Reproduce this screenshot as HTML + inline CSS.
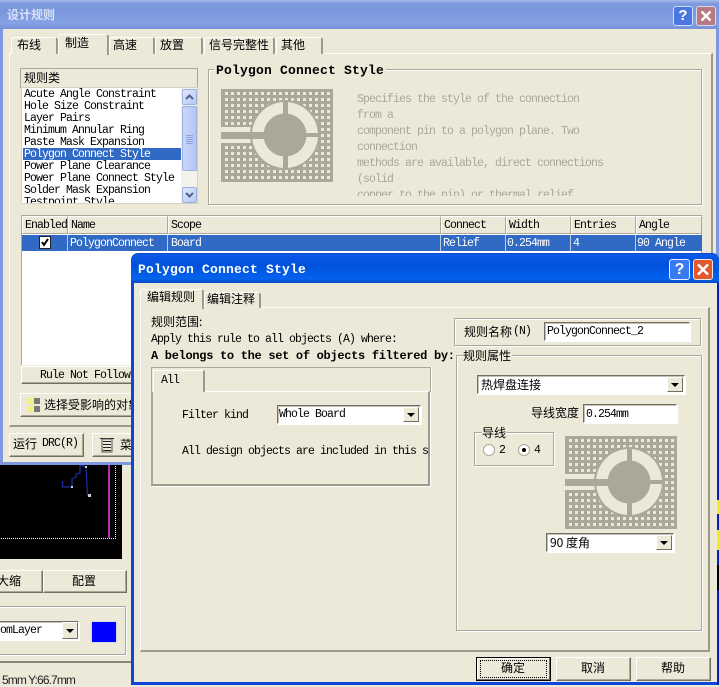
<!DOCTYPE html>
<html><head><meta charset="utf-8">
<style>
html,body{margin:0;padding:0}
body{width:719px;height:686px;overflow:hidden;position:relative;background:#ece9d8}
div,svg,span.a{position:absolute;box-sizing:border-box}
.t{position:absolute;white-space:pre;margin-top:1px;font:11.500px/12px "Liberation Mono","WenQuanYi Zen Hei",monospace;letter-spacing:-.9px;color:#000}
.b{position:absolute;white-space:pre;font:bold 13px/14px "Liberation Mono",monospace;letter-spacing:.2px;color:#000}
.c{position:absolute;white-space:pre;font:12px/14px "WenQuanYi Zen Hei","Noto Sans CJK SC",sans-serif;color:#000}
.g{color:#aca899}
.w{color:#fff}
.btn{background:#ece9d8;border:1px solid;border-color:#fff #716f64 #716f64 #fff;box-shadow:inset -1px -1px 0 #aca899}
.grp{border:1px solid #aca899;box-shadow:1px 1px 0 #fff,inset 1px 1px 0 #fff}
.in{background:#fff;border:1px solid;border-color:#716f64 #fff #fff #716f64;box-shadow:inset 1px 1px 0 #c4c1b2,1px 1px 0 #fff}
.tab{background:#ece9d8;border-top:1px solid #fff;border-left:1px solid #fff;border-right:2px solid #9d9a8a;border-radius:3px 3px 0 0}
.arrow{background:#ece9d8;border:1px solid;border-color:#fff #716f64 #716f64 #fff}
.arrow:after{content:"";position:absolute;left:50%;top:50%;margin:-2px 0 0 -4px;border:4px solid transparent;border-top:4px solid #000;border-bottom:0}
.h{background:#ece9d8;border-right:1px solid #aca899;border-bottom:1px solid #aca899;border-top:1px solid #fff;border-left:1px solid #fff}
</style></head><body>
<svg width="0" height="0" style="left:0;top:0">
<defs>
<pattern id="dots" width="6" height="6" patternUnits="userSpaceOnUse" patternTransform="translate(4 3)"><rect width="6" height="6" fill="#aca899"/><rect x="0" y="0" width="3" height="3" fill="#ece9d8"/></pattern>
<g id="pad">
<rect width="112" height="93" fill="url(#dots)"/>
<rect x="0" y="0" width="112" height="3" fill="#aca899"/><rect x="0" y="90" width="112" height="3" fill="#aca899"/>
<rect x="0" y="0" width="3" height="93" fill="#aca899"/><rect x="109" y="0" width="3" height="93" fill="#aca899"/>
<rect x="0" y="38" width="45" height="16" fill="#ece9d8"/>
<circle cx="64" cy="46" r="35" fill="#aca899"/>
<circle cx="64" cy="46" r="33" fill="#ece9d8"/>
<circle cx="64" cy="46" r="21.500" fill="#aca899"/>
<rect x="0" y="43" width="50" height="7" fill="#aca899"/>
<rect x="62" y="13" width="5" height="66" fill="#aca899"/>
<rect x="64" y="44" width="34" height="4" fill="#aca899"/>
</g>
</defs></svg>

<!-- background lower-left app -->
<div style="left:0;top:464px;width:122px;height:95px;background:#000"></div>
<svg style="left:0;top:464px" width="122" height="95">
<rect x="108" y="0" width="2" height="74" fill="#b030b0"/>
<path d="M115.500 0V74.500H0" fill="none" stroke="#fff" stroke-dasharray="1 1"/>
<path d="M62.500 17V23H72V15L76 13V10L80 9V1L86 3L87.500 31L89 31" fill="none" stroke="#1a2ea8" stroke-width="1.200"/>
<rect x="85" y="2" width="2" height="2" fill="#ccd"/><rect x="88" y="30" width="3" height="3" fill="#ccd"/><rect x="71" y="22" width="2" height="2" fill="#ccd"/>
</svg>
<div class="btn" style="left:-4px;top:570px;width:47px;height:23px"></div>
<div class="c" style="left:-3px;top:574px">大缩</div>
<div class="btn" style="left:43px;top:570px;width:84px;height:23px"></div>
<div class="c" style="left:72px;top:574px">配置</div>
<div class="grp" style="left:-4px;top:606px;width:130px;height:49px"></div>
<div class="c" style="left:-3px;top:600px;background:#ece9d8">:</div>
<div class="in" style="left:-4px;top:621px;width:83px;height:19px"></div>
<div class="t" style="left:0;top:624px">omLayer</div>
<div class="arrow" style="left:62px;top:622px;width:16px;height:17px"></div>
<div style="left:91px;top:621px;width:26px;height:22px;background:#0000ff;border:1px solid #d8d8e8"></div>
<div style="left:0;top:661px;width:131px;height:2px;background:#8a8778"></div>
<div class="t" style="left:2px;top:672px;font:12px/14px 'Liberation Sans',sans-serif;letter-spacing:-.9px;color:#222">5mm Y:66.7mm</div>

<!-- outer window -->
<div style="left:0;top:0;width:719px;height:465px;background:#7b98e0"></div>
<div style="left:0;top:0;width:719px;height:29px;background:linear-gradient(180deg,#a8bcec 0,#7f9ade 12%,#7a97df 40%,#86a1e4 80%,#7590d8 100%)"></div>
<div style="left:3px;top:29px;width:713px;height:433px;background:#ece9d8"></div>
<div class="c" style="left:7px;top:8px;color:#d8e2f6;font-weight:bold">设计规则</div>
<div style="left:673px;top:6px;width:20px;height:20px;background:#4a78e0;border:1px solid #d0dcf8;border-radius:3px"></div>
<div class="t" style="left:673px;top:7px;width:20px;text-align:center;color:#fff;font:bold 15px/16px 'Liberation Sans',sans-serif;letter-spacing:0">?</div>
<div style="left:696px;top:6px;width:20px;height:20px;background:#b87a80;border:1px solid #d8dcec;border-radius:3px"></div>
<svg style="left:696px;top:6px" width="20" height="20"><path d="M5.500 5.500L14.500 14.500M14.500 5.500L5.500 14.500" stroke="#fff" stroke-width="2.400"/></svg>

<!-- tab panel outer -->
<div style="left:9px;top:53px;width:704px;height:374px;border-top:1px solid #fff;border-left:1px solid #fff;border-right:2px solid #9d9a8a;border-bottom:2px solid #9d9a8a"></div>
<div class="tab" style="left:11px;top:37px;width:47px;height:17px"></div><div class="c" style="left:17px;top:38px">布线</div>
<div class="tab" style="left:109px;top:37px;width:46px;height:17px"></div><div class="c" style="left:113px;top:38px">高速</div>
<div class="tab" style="left:155px;top:37px;width:48px;height:17px"></div><div class="c" style="left:160px;top:38px">放置</div>
<div class="tab" style="left:204px;top:37px;width:71px;height:17px"></div><div class="c" style="left:209px;top:38px">信号完整性</div>
<div class="tab" style="left:276px;top:37px;width:47px;height:17px"></div><div class="c" style="left:281px;top:38px">其他</div>
<div class="tab" style="left:58px;top:34px;width:51px;height:21px"></div><div class="c" style="left:65px;top:36px">制造</div>

<!-- rule class -->
<div class="h" style="left:20px;top:68px;width:178px;height:20px;border-color:#aca899 #aca899 #aca899 #aca899"></div>
<div class="c" style="left:24px;top:71px">规则类</div>
<div style="left:21px;top:87px;width:177px;height:117px;background:#fff;border:1px solid #d5d2c2;overflow:hidden">
<div style="left:1px;top:60px;width:158px;height:12px;background:#316ac5"></div>
<div class="t" style="left:2px;top:0">Acute Angle Constraint</div>
<div class="t" style="left:2px;top:12px">Hole Size Constraint</div>
<div class="t" style="left:2px;top:24px">Layer Pairs</div>
<div class="t" style="left:2px;top:36px">Minimum Annular Ring</div>
<div class="t" style="left:2px;top:48px">Paste Mask Expansion</div>
<div class="t w" style="left:2px;top:60px">Polygon Connect Style</div>
<div class="t" style="left:2px;top:72px">Power Plane Clearance</div>
<div class="t" style="left:2px;top:84px">Power Plane Connect Style</div>
<div class="t" style="left:2px;top:96px">Solder Mask Expansion</div>
<div class="t" style="left:2px;top:108px">Testpoint Style</div>
<div style="left:159px;top:0;width:17px;height:115px;background:#f3f2ec"></div>
</div>
<div style="left:182px;top:89px;width:15px;height:16px;background:linear-gradient(135deg,#e0e8fd,#b8c8f4);border:1px solid #9db0e0;border-radius:2px"></div>
<svg style="left:182px;top:89px" width="15" height="16"><path d="M4 10L7.500 6.500L11 10" fill="none" stroke="#4d6185" stroke-width="2"/></svg>
<div style="left:182px;top:106px;width:15px;height:65px;background:linear-gradient(90deg,#c9d7fb,#b4c6f5);border:1px solid #9db0e0;border-radius:2px"></div>
<svg style="left:182px;top:106px" width="15" height="65"><path d="M4 29.500H11M4 31.500H11M4 33.500H11M4 35.500H11M4 37.500H11" stroke="#8fa4d8"/></svg>
<div style="left:182px;top:187px;width:15px;height:16px;background:linear-gradient(135deg,#e0e8fd,#b8c8f4);border:1px solid #9db0e0;border-radius:2px"></div>
<svg style="left:182px;top:187px" width="15" height="16"><path d="M4 6L7.500 9.500L11 6" fill="none" stroke="#4d6185" stroke-width="2"/></svg>

<!-- description group -->
<div class="grp" style="left:208px;top:69px;width:494px;height:136px"></div>
<div class="b" style="left:214px;top:64px;background:#ece9d8;padding:0 2px">Polygon Connect Style</div>
<svg style="left:221px;top:89px" width="112" height="93"><use href="#pad"/></svg>
<div style="left:357px;top:93px;width:300px;height:103px;overflow:hidden">
<div class="t g" style="left:0;top:0">Specifies the style of the connection</div>
<div class="t g" style="left:0;top:16px">from a</div>
<div class="t g" style="left:0;top:32px">component pin to a polygon plane. Two</div>
<div class="t g" style="left:0;top:48px">connection</div>
<div class="t g" style="left:0;top:64px">methods are available, direct connections</div>
<div class="t g" style="left:0;top:80px">(solid</div>
<div class="t g" style="left:0;top:96px">copper to the pin) or thermal relief</div>
</div>

<!-- table -->
<div style="left:21px;top:215px;width:681px;height:150px;background:#fff;border:1px solid #aca899;border-bottom:0"></div>
<div class="h" style="left:22px;top:216px;width:46px;height:18px"></div><div class="t" style="left:25px;top:219px">Enabled</div>
<div class="h" style="left:68px;top:216px;width:100px;height:18px"></div><div class="t" style="left:71px;top:219px">Name</div>
<div class="h" style="left:168px;top:216px;width:273px;height:18px"></div><div class="t" style="left:171px;top:219px">Scope</div>
<div class="h" style="left:441px;top:216px;width:65px;height:18px"></div><div class="t" style="left:444px;top:219px">Connect</div>
<div class="h" style="left:506px;top:216px;width:65px;height:18px"></div><div class="t" style="left:509px;top:219px">Width</div>
<div class="h" style="left:571px;top:216px;width:65px;height:18px"></div><div class="t" style="left:574px;top:219px">Entries</div>
<div class="h" style="left:636px;top:216px;width:66px;height:18px"></div><div class="t" style="left:639px;top:219px">Angle</div>
<div style="left:22px;top:235px;width:680px;height:16px;background:#316ac5"></div>
<div style="left:67px;top:235px;width:1px;height:16px;background:#b9cbe8"></div>
<div style="left:167px;top:235px;width:1px;height:16px;background:#b9cbe8"></div>
<div style="left:440px;top:235px;width:1px;height:16px;background:#b9cbe8"></div>
<div style="left:505px;top:235px;width:1px;height:16px;background:#b9cbe8"></div>
<div style="left:570px;top:235px;width:1px;height:16px;background:#b9cbe8"></div>
<div style="left:635px;top:235px;width:1px;height:16px;background:#b9cbe8"></div>
<div style="left:39px;top:236px;width:12px;height:13px;background:#fff;border:1px solid #222"></div>
<svg style="left:39px;top:236px" width="12" height="13"><path d="M3 6L5 9L9 3" fill="none" stroke="#000" stroke-width="2"/></svg>
<div class="t w" style="left:70px;top:237px">PolygonConnect</div>
<div class="t w" style="left:171px;top:237px">Board</div>
<div class="t w" style="left:443px;top:237px">Relief</div>
<div class="t w" style="left:507px;top:237px">0.254mm</div>
<div class="t w" style="left:573px;top:237px">4</div>
<div class="t w" style="left:637px;top:237px">90 Angle</div>

<div class="btn" style="left:21px;top:366px;width:681px;height:18px"></div>
<div class="t" style="left:40px;top:369px">Rule Not Follow</div>
<div class="btn" style="left:20px;top:393px;width:300px;height:24px"></div>
<svg style="left:27px;top:398px" width="14" height="15">
<rect x="0" y="0" width="6" height="6" fill="#f0f080"/><rect x="7" y="0" width="6" height="6" fill="#777"/>
<rect x="0" y="8" width="6" height="6" fill="#f0f080"/><rect x="7" y="8" width="6" height="6" fill="#777"/>
</svg>
<div class="c" style="left:44px;top:398px">选择受影响的对象</div>
<div class="btn" style="left:9px;top:433px;width:75px;height:24px"></div>
<div class="c" style="left:13px;top:437px">运行 </div>
<div class="t" style="left:42px;top:437px">DRC(R)</div>
<div class="btn" style="left:92px;top:433px;width:60px;height:24px"></div>
<svg style="left:99px;top:437px" width="16" height="16"><path d="M1 1.500H15M4 4.500H12M4 7.500H12M4 10.500H12M4 13.500H12" stroke="#222"/><rect x="3" y="2" width="10" height="13" fill="none" stroke="#555"/></svg>
<div class="c" style="left:120px;top:438px">菜单</div>

<!-- second window -->
<div style="left:131px;top:253px;width:588px;height:432px;background:#0b46d8;border-radius:7px 7px 0 0"></div>
<div style="left:131px;top:254px;width:588px;height:29px;background:linear-gradient(180deg,#0a5fe8 0,#0a56e4 10%,#0052dc 40%,#0462ee 85%,#0348c4 100%);border-radius:7px 7px 0 0"></div>
<div style="left:134px;top:283px;width:583px;height:399px;background:#ece9d8"></div>
<div style="left:717px;top:283px;width:2px;height:402px;background:#0a1fb0"></div>
<div style="left:717px;top:500px;width:2px;height:14px;background:#f0f020"></div>
<div style="left:717px;top:530px;width:2px;height:20px;background:#f0f020"></div>
<div style="left:717px;top:565px;width:2px;height:25px;background:#000"></div>
<div style="left:131px;top:685px;width:588px;height:1px;background:#ece9d8"></div>
<div class="b w" style="left:138px;top:263px">Polygon Connect Style</div>
<div style="left:669px;top:259px;width:21px;height:21px;background:#3a7af0;border:1px solid #e8eefc;border-radius:3px"></div>
<div class="t" style="left:669px;top:260px;width:21px;text-align:center;color:#fff;font:bold 16px/17px 'Liberation Sans',sans-serif;letter-spacing:0">?</div>
<div style="left:693px;top:259px;width:20px;height:21px;background:#e2582e;border:1px solid #f4e8e0;border-radius:3px"></div>
<svg style="left:693px;top:259px" width="20" height="21"><path d="M5 5.500L15 15.500M15 5.500L5 15.500" stroke="#fff" stroke-width="2.400"/></svg>

<div style="left:140px;top:307px;width:570px;height:345px;border-top:1px solid #fff;border-left:1px solid #fff;border-right:2px solid #9d9a8a;border-bottom:2px solid #9d9a8a"></div>
<div class="tab" style="left:204px;top:292px;width:57px;height:16px"></div><div class="c" style="left:207px;top:292px">编辑注释</div>
<div class="tab" style="left:140px;top:289px;width:64px;height:20px"></div><div class="c" style="left:147px;top:290px">编辑规则</div>

<div class="c" style="left:151px;top:315px">规则范围:</div>
<div class="t" style="left:151px;top:333px">Apply this rule to all objects (A) where:</div>
<div class="b" style="left:151px;top:349px;font-size:12px;letter-spacing:-.3px">A belongs to the set of objects filtered by:</div>

<div style="left:151px;top:367px;width:280px;height:25px;border:1px solid #aca899;border-bottom:0;box-shadow:1px 0 0 #fff"></div>
<div style="left:151px;top:391px;width:279px;height:95px;border-top:1px solid #fff;border-left:2px solid #aca899;border-right:2px solid #9d9a8a;border-bottom:2px solid #9d9a8a;box-shadow:1px 1px 0 #fff"></div>
<div class="tab" style="left:153px;top:370px;width:52px;height:22px;border-radius:0"></div>
<div class="t" style="left:161px;top:374px">All</div>
<div class="t" style="left:182px;top:409px">Filter kind</div>
<div class="in" style="left:277px;top:405px;width:144px;height:19px"></div>
<div class="t" style="left:279px;top:408px">Whole Board</div>
<div class="arrow" style="left:403px;top:407px;width:16px;height:15px"></div>
<div style="left:182px;top:445px;width:246px;height:14px;overflow:hidden"><div class="t" style="left:0;top:0">All design objects are included in this set</div></div>

<div class="grp" style="left:454px;top:318px;width:247px;height:28px"></div>
<div class="c" style="left:464px;top:325px">规则名称</div>
<div class="t" style="left:513px;top:325px">(N)</div>
<div class="in" style="left:544px;top:322px;width:146px;height:19px"></div>
<div class="t" style="left:547px;top:325px">PolygonConnect_2</div>

<div class="grp" style="left:456px;top:355px;width:246px;height:276px"></div>
<div class="c" style="left:463px;top:349px;background:#ece9d8;padding-right:1px">规则属性</div>
<div class="in" style="left:477px;top:375px;width:208px;height:19px"></div>
<div class="c" style="left:481px;top:378px">热焊盘连接</div>
<div class="arrow" style="left:667px;top:377px;width:16px;height:15px"></div>
<div class="c" style="left:531px;top:406px">导线宽度</div>
<div class="in" style="left:583px;top:404px;width:94px;height:19px"></div>
<div class="t" style="left:586px;top:408px">0.254mm</div>

<div class="grp" style="left:474px;top:432px;width:80px;height:34px"></div>
<div class="c" style="left:482px;top:426px;background:#ece9d8">导线</div>
<div style="left:483px;top:444px;width:12px;height:12px;border-radius:50%;background:#fff;border:1px solid #aca899"></div>
<div class="t" style="left:499px;top:444px">2</div>
<div style="left:518px;top:444px;width:12px;height:12px;border-radius:50%;background:#fff;border:1px solid #aca899"></div>
<div style="left:522px;top:448px;width:4px;height:4px;border-radius:50%;background:#000"></div>
<div class="t" style="left:534px;top:444px">4</div>

<svg style="left:565px;top:436px" width="112" height="93"><use href="#pad"/></svg>
<div class="in" style="left:546px;top:533px;width:128px;height:19px"></div>
<div class="c" style="left:550px;top:536px">90 度角</div>
<div class="arrow" style="left:656px;top:535px;width:16px;height:15px"></div>

<div style="left:476px;top:657px;width:75px;height:24px;background:#ece9d8;border:1px solid #000;box-shadow:inset -1px -1px 0 #716f64,inset 1px 1px 0 #fff"></div>
<div style="left:480px;top:660px;width:67px;height:18px;border:1px dotted #000"></div>
<div class="c" style="left:501px;top:661px">确定</div>
<div class="btn" style="left:556px;top:657px;width:75px;height:24px"></div>
<div class="c" style="left:581px;top:661px">取消</div>
<div class="btn" style="left:636px;top:657px;width:75px;height:24px"></div>
<div class="c" style="left:661px;top:661px">帮助</div>
</body></html>
